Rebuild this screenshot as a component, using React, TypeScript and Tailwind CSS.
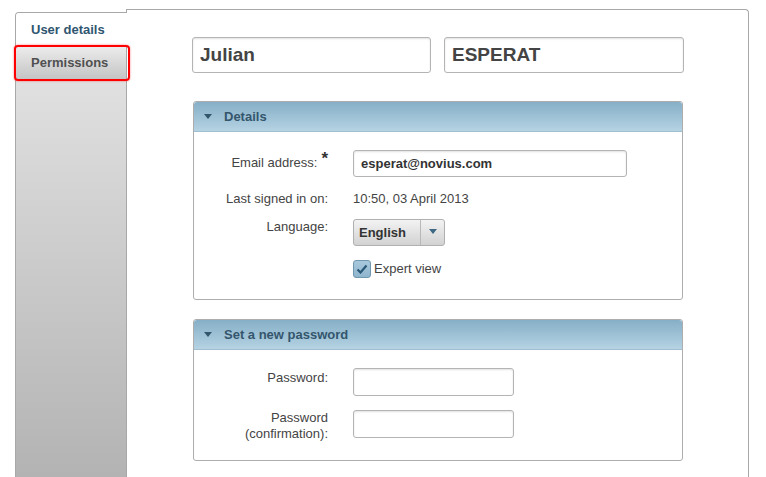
import React from 'react'

const font = { fontFamily: '"Liberation Sans", Arial, sans-serif' }

function Caret({ className = '' }: { className?: string }) {
  return (
    <svg width="8" height="5" viewBox="0 0 8 5" className={className}>
      <path d="M0 0 L8 0 L4 5 Z" fill="currentColor" />
    </svg>
  )
}

function PanelHeader({ title }: { title: string }) {
  return (
    <div className="h-[30px] flex items-center bg-gradient-to-b from-[#86afc7] to-[#b5d3e3] rounded-t-[3px] border-b border-[#9fbfd1]">
      <Caret className="ml-[10px] text-[#34566d]" />
      <span className="ml-[12px] pt-[1px] text-[13px] font-bold text-[#34566d]">{title}</span>
    </div>
  )
}

function TextInput({ value = '', className = '' }: { value?: string; className?: string }) {
  return (
    <div
      className={`border border-[#b4b4b4] rounded-[3px] bg-white shadow-[inset_0_1px_2px_rgba(0,0,0,0.12)] flex items-center px-[7px] text-[13px] font-bold text-[#333] ${className}`}
    >
      {value}
    </div>
  )
}

export default function App() {
  return (
    <div style={font} className="w-[766px] h-[477px] bg-white overflow-hidden">
      <div className="flex ml-[15px] mt-[9px] w-[734px] h-[468px]">
        {/* sidebar */}
        <div className="w-[112px] flex flex-col">
          <div className="h-[3px] border-r border-[#a8a8a8]" />
          <div className="flex-1 flex flex-col border-l border-t border-[#a8a8a8] rounded-tl-[4px] bg-gradient-to-b from-[#e8e8e8] to-[#b3b3b3]">
            <div className="h-[33px] bg-white rounded-tl-[3px] flex items-center pl-[15px] text-[13px] font-bold text-[#2f5670]">
              User details
            </div>
            <div className="relative h-[34px] border-y border-r border-[#a8a8a8] bg-gradient-to-b from-[#ececec] to-[#c4c4c4] flex items-center pl-[15px] text-[13px] font-bold text-[#505050]">
              Permissions
              <div className="absolute -left-[2px] -top-[2px] w-[116px] h-[36px] border-2 border-[#ff0000] rounded-[4px] shadow-[0_0_2px_rgba(255,0,0,0.6)]" />
            </div>
            <div className="flex-1 border-r border-[#a8a8a8]" />
          </div>
        </div>

        {/* content */}
        <div className="flex-1 border-t border-r border-[#a8a8a8] rounded-tr-[4px] pl-[65px] pr-[64px] pt-[27px]">
          <div className="flex gap-[13px]">
            <TextInput value="Julian" className="w-[239px] h-[36px] !text-[19px] !text-[#444]" />
            <TextInput value="ESPERAT" className="w-[240px] h-[36px] !text-[19px] !text-[#444]" />
          </div>

          {/* Details */}
          <div className="mx-[1px] mt-[28px] border border-[#adadad] rounded-[3px] bg-white">
            <PanelHeader title="Details" />
            <div className="pt-[18px] pb-[20px] text-[13px] text-[#444]">
              <div className="flex">
                <div className="w-[134px] text-right pt-[5px] leading-[16px] flex justify-end">
                  <span>Email address:</span>
                  <span className="ml-[4px] -mt-[4px] text-[17px] font-bold leading-[16px] text-[#333]">*</span>
                </div>
                <TextInput value="esperat@novius.com" className="ml-[25px] w-[274px] h-[27px]" />
              </div>
              <div className="flex mt-[14px] leading-[16px]">
                <div className="w-[134px] text-right">Last signed in on:</div>
                <div className="ml-[25px]">10:50, 03 April 2013</div>
              </div>
              <div className="flex mt-[12px]">
                <div className="w-[134px] text-right leading-[16px]">Language:</div>
                <div className="ml-[25px] w-[92px] h-[27px] flex border border-[#b0b0b0] rounded-[3px] bg-gradient-to-b from-[#f3f3f3] to-[#d2d2d2]">
                  <div className="w-[67px] border-r border-[#b8b8b8] flex items-center pl-[5px] font-bold text-[#333]">
                    English
                  </div>
                  <div className="flex-1 flex justify-center pt-[9px]">
                    <Caret className="text-[#3f6883]" />
                  </div>
                </div>
              </div>
              <div className="flex mt-[13px] items-center">
                <div className="w-[134px]" />
                <div className="ml-[25px] w-[18px] h-[18px] rounded-[3px] border border-[#7097b0] bg-gradient-to-b from-[#a9c8dc] to-[#8fb5cd] flex items-center justify-center">
                  <svg width="12" height="10" viewBox="0 0 12 10">
                    <path d="M1.5 5.5 L4.5 8.5 L10.5 1.5" fill="none" stroke="#2a5877" strokeWidth="2.2" />
                  </svg>
                </div>
                <span className="ml-[3px]">Expert view</span>
              </div>
            </div>
          </div>

          {/* Password */}
          <div className="mx-[1px] mt-[19px] border border-[#adadad] rounded-[3px] bg-white">
            <PanelHeader title="Set a new password" />
            <div className="pt-[18px] pb-[18px] text-[13px] text-[#444]">
              <div className="flex">
                <div className="w-[134px] text-right pt-[2px] leading-[16px]">Password:</div>
                <TextInput className="ml-[25px] w-[161px] h-[28px]" />
              </div>
              <div className="flex mt-[14px]">
                <div className="w-[134px] text-right leading-[16px]">
                  Password
                  <br />
                  (confirmation):
                </div>
                <TextInput className="ml-[25px] w-[161px] h-[28px]" />
              </div>
            </div>
          </div>
        </div>
      </div>
    </div>
  )
}
